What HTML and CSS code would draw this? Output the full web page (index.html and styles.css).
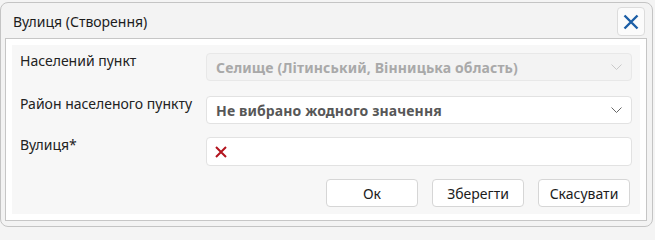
FILE: index.html
```html
<!DOCTYPE html>
<html lang="uk">
<head>
<meta charset="utf-8">
<title>Вулиця (Створення)</title>
<link rel="stylesheet" href="styles.css">
</head>
<body>
<div class="window">
  <div class="titlebar">
    <span class="title">Вулиця (Створення)</span>
    <button class="close" type="button" aria-label="Закрити">
      <svg width="16" height="16" viewBox="0 0 16 16"><path d="M1.5 1.5 L14.5 14.5 M14.5 1.5 L1.5 14.5" stroke="#1b5ea6" stroke-width="2.4" fill="none" stroke-linecap="butt"/></svg>
    </button>
  </div>
  <div class="panel">
    <div class="content">
      <div class="row">
        <label class="label">Населений пункт</label>
        <div class="field select disabled">
          <span class="value">Селище (Літинський, Вінницька область)</span>
          <svg class="chev" width="11" height="6" viewBox="0 0 11 6"><path d="M0.5 0.5 L5.5 5.5 L10.5 0.5" stroke="#c9c9c9" stroke-width="1" fill="none"/></svg>
        </div>
      </div>
      <div class="row">
        <label class="label">Район населеного пункту</label>
        <div class="field select">
          <span class="value">Не вибрано жодного значення</span>
          <svg class="chev" width="11" height="6" viewBox="0 0 11 6"><path d="M0.5 0.5 L5.5 5.5 L10.5 0.5" stroke="#666" stroke-width="1" fill="none"/></svg>
        </div>
      </div>
      <div class="row">
        <label class="label">Вулиця*</label>
        <div class="field input">
          <svg class="err" width="12" height="12" viewBox="0 0 12 12"><path d="M1 1 L11 11 M11 1 L1 11" stroke="#b3141e" stroke-width="2" fill="none"/></svg>
        </div>
      </div>
      <div class="actions">
        <button class="btn" type="button">Ок</button>
        <button class="btn" type="button">Зберегти</button>
        <button class="btn" type="button">Скасувати</button>
      </div>
    </div>
  </div>
</div>
</body>
</html>
```
FILE: styles.css
```css
html, body {
  margin: 0;
  padding: 0;
  background: #f4f4f4;
}
body {
  font-family: "Noto Sans", "Open Sans", sans-serif;
  font-size: 14px;
  color: #222;
  padding-top: 2px;
}
.window {
  box-sizing: border-box;
  width: 653px;
  height: 225px;
  border: 1px solid #c4c4c4;
  border-radius: 8px;
  background: #f3f3f3;
  display: flex;
  flex-direction: column;
}
.titlebar {
  height: 35px;
  display: flex;
  align-items: center;
  justify-content: space-between;
  padding: 0 7px 0 12px;
  box-sizing: border-box;
}
.title {
  font-size: 14px;
  color: #1c1c1c;
  margin-top: 1px;
}
.close {
  width: 28px;
  height: 29px;
  align-self: flex-start;
  margin-top: 4px;
  border: 1px solid #dcdcdc;
  border-radius: 4px;
  background: #fbfbfb;
  padding: 0;
  display: flex;
  align-items: center;
  justify-content: center;
}
.panel {
  margin: 0 5px 5px 4px;
  border: 1px solid #c6c6c6;
  background: #ffffff;
  padding: 6px;
  flex: 1;
  display: flex;
}
.content {
  flex: 1;
  background: #f7f7f7;
  padding: 8px 8px 6px 8px;
  display: flex;
  flex-direction: column;
}
.row {
  display: flex;
  align-items: flex-start;
  margin-bottom: 13px;
}
.row:first-child {
  margin-bottom: 15px;
}
.label {
  width: 186px;
  flex: none;
  line-height: 20px;
  margin-top: -2px;
  color: #222;
}
.field {
  flex: 1;
  box-sizing: border-box;
  height: 28px;
  border: 1px solid #e2e2e2;
  border-radius: 4px;
  background: #ffffff;
  display: flex;
  align-items: center;
  padding: 0 9px 0 9px;
}
.field.input {
  height: 29px;
  padding-left: 8px;
}
.select .value {
  flex: 1;
  font-weight: 700;
  color: #575757;
  white-space: nowrap;
  overflow: hidden;
  letter-spacing: 0.12px;
}
.disabled {
  background: #f3f3f3;
  border-color: #e8e8e8;
}
.disabled .value {
  color: #a9a9a9;
}
.chev {
  flex: none;
}
.actions {
  display: flex;
  justify-content: flex-end;
  gap: 14px;
  padding-right: 2px;
}
.btn {
  width: 92px;
  height: 28px;
  border: 1px solid #d6d6d6;
  border-radius: 4px;
  background: #ffffff;
  font-family: "Noto Sans", "Open Sans", sans-serif;
  font-size: 14px;
  color: #1c1c1c;
  padding: 0;
}
```
